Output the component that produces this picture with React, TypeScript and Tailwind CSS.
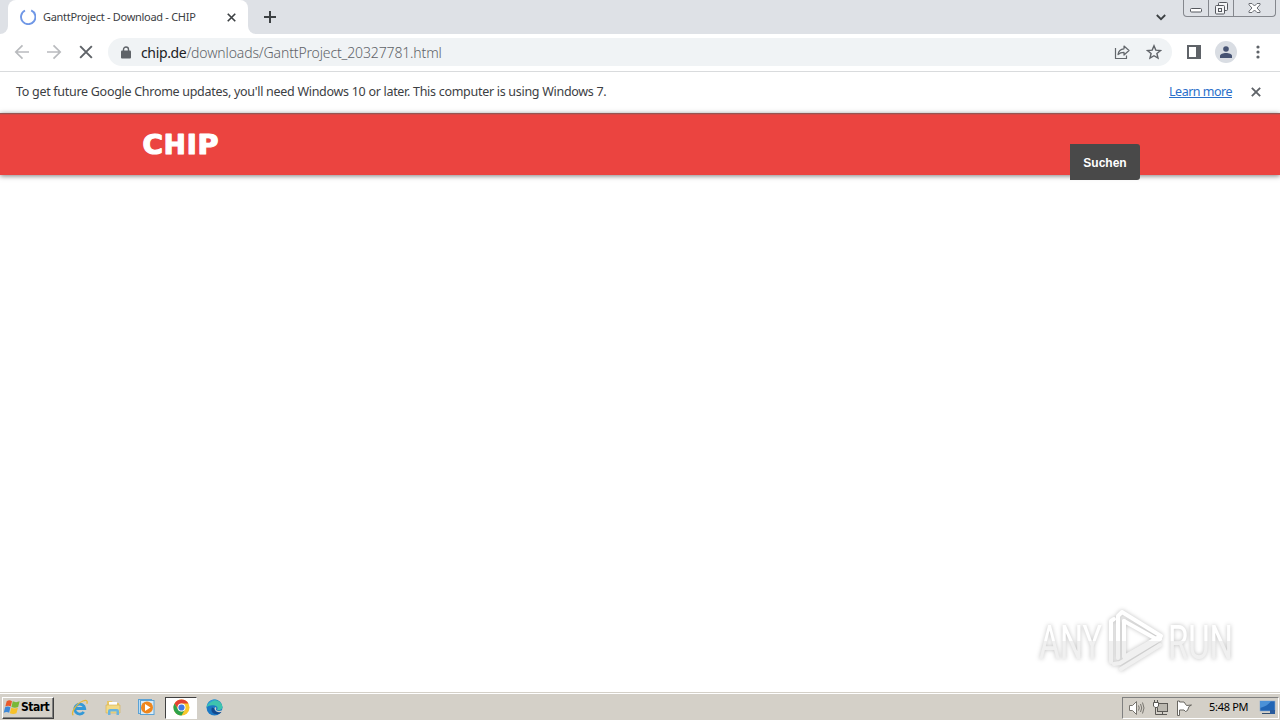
import React from 'react';

const ui = "font-['Noto_Sans','Open_Sans',sans-serif]";

const Spinner = () => (
  <svg className="size-4" viewBox="0 0 16 16" fill="none">
    <path d="M11.2 1.4A7.2 7.2 0 1 1 5 1.5" stroke="#6f97e6" strokeWidth="1.9" />
  </svg>
);

const Cross: React.FC<{ size: number; color: string; weight?: number }> = ({ size, color, weight = 2 }) => (
  <svg width={size} height={size} viewBox="0 0 12 12" fill="none" stroke={color} strokeWidth={weight}>
    <path d="M1 1 11 11M11 1 1 11" />
  </svg>
);

const Arrow: React.FC<{ flip?: boolean }> = ({ flip }) => (
  <svg className={flip ? 'size-4 rotate-180' : 'size-4'} viewBox="0 0 16 16" fill="none" stroke="#b9bbbe" strokeWidth="1.7">
    <path d="M15 8H2M8.5 1.3 1.8 8l6.7 6.7" />
  </svg>
);

const WindowControls = () => (
  <div className="flex h-[17px] w-[93px] rounded-b-[4px] border border-t-0 border-[#84878d] bg-[#dee1e6]">
    <div className="flex w-[25px] justify-center border-r border-[#84878d]">
      <svg width="12" height="16" viewBox="0 0 12 16" fill="#fff" stroke="#55585e">
        <rect x=".5" y="8.5" width="11" height="3.5" rx="1" />
      </svg>
    </div>
    <div className="flex w-[25px] justify-center border-r border-[#84878d]">
      <svg width="13" height="16" viewBox="0 0 13 16" fill="#f4f5f7" stroke="#55585e">
        <rect x="3.5" y="2.5" width="9" height="8" rx="1" />
        <rect x=".5" y="5.5" width="9" height="8.5" rx="1" />
        <rect x="3.5" y="8.5" width="3" height="3" />
      </svg>
    </div>
    <div className="flex flex-1 justify-center">
      <svg width="13" height="16" viewBox="0 0 13 16" fill="#fff" stroke="#6a6d73" strokeLinejoin="round">
        <path d="M1 3.5h3L6.5 6 9 3.5h3v1.3L9 8l3 3.2v1.3H9L6.5 10 4 12.5H1v-1.3L4 8 1 4.8z" />
      </svg>
    </div>
  </div>
);

const TabStrip = () => (
  <div className="flex h-[34px] bg-[#dee1e6]">
    <div className="w-2 bg-white">
      <div className="h-full rounded-br-lg bg-[#dee1e6]" />
    </div>
    <div className="flex w-60 items-center rounded-t-lg bg-white pl-3 pr-2.5">
      <Spinner />
      <span className="ml-[7px] w-[178px] whitespace-nowrap text-[11px] tracking-[-0.29px] text-[#3c4043]">
        GanttProject - Download - CHIP
      </span>
      <span className="ml-1.5">
        <Cross size={9} color="#3c4043" weight={2.2} />
      </span>
    </div>
    <div className="w-2 bg-white">
      <div className="h-full rounded-bl-lg bg-[#dee1e6]" />
    </div>
    <div className="flex flex-1 items-center pl-2">
      <svg width="12" height="12" viewBox="0 0 12 12" stroke="#3c4043" strokeWidth="2">
        <path d="M6 0v12M0 6h12" />
      </svg>
    </div>
    <div className="flex w-[27px] items-center">
      <svg width="10" height="7" viewBox="0 0 10 7" fill="none" stroke="#3c4043" strokeWidth="1.8">
        <path d="m.8 1 4.2 4.2L9.2 1" />
      </svg>
    </div>
    <WindowControls />
    <div className="w-1" />
  </div>
);

const Toolbar = () => (
  <div className="flex h-[38px] items-center border-b border-[#d9dbdd] bg-white pb-px pl-[14px]">
    <div className="flex w-[94px] items-center gap-4">
      <Arrow />
      <Arrow flip />
      <span className="ml-px">
        <Cross size={14} color="#5f6368" weight={1.7} />
      </span>
    </div>
    <div className="flex h-7 w-[1064px] items-center rounded-full bg-[#f0f3f5] pl-[13px] pr-[10px]">
      <svg width="10" height="13" viewBox="0 0 10 13">
        <path d="M2.5 5.5v-2a2.5 2.5 0 0 1 5 0v2" fill="none" stroke="#5f6368" strokeWidth="1.4" />
        <rect y="4.5" width="10" height="8" rx="1" fill="#5f6368" />
      </svg>
      <span className="ml-[10px] flex-1 whitespace-nowrap pt-0.5 text-sm font-light tracking-[-0.14px] text-[#5f6368]">
        <span className="font-normal tracking-[-0.35px] text-[#202124]">chip.de</span>/downloads/GanttProject_20327781.html
      </span>
      <svg width="16" height="16" viewBox="0 0 16 16" fill="none" stroke="#63676c" strokeWidth="1.2" strokeLinejoin="round">
        <path d="M1.5 4v10.500h11v-3" />
        <path d="M4 10.500c.5-3.500 2.500-5.500 6-5.700V2l5 4.500-5 4.500V8.300C7.500 8.300 5.500 9 4 10.500Z" />
      </svg>
      <svg className="ml-4" width="16" height="16" viewBox="0 0 16 16" fill="none" stroke="#5f6368" strokeWidth="1.4">
        <path d="m8 1.800 1.800 4.300 4.700.4-3.600 3 1.100 4.600L8 11.700l-4 2.400 1.100-4.600-3.600-3 4.700-.4z" />
      </svg>
    </div>
    <svg className="ml-[15px]" width="14" height="14" viewBox="0 0 14 14">
      <rect x="1" y="1" width="12" height="12" fill="#fff" stroke="#5f6368" strokeWidth="2" />
      <rect x="9" y="1" width="4.500" height="12" fill="#5f6368" />
    </svg>
    <span className="ml-[14px] flex size-[22px] items-center justify-center rounded-full bg-[#d9dde3]">
      <svg width="12" height="12" viewBox="0 0 12 12" fill="#465373">
        <circle cx="6" cy="3" r="2.8" />
        <path d="M0 12v-2c0-2 3-3 6-3s6 1 6 3v2z" />
      </svg>
    </span>
    <svg className="ml-[19px]" width="4" height="14" viewBox="0 0 4 14" fill="#5f6368">
      <circle cx="2" cy="2" r="1.6" />
      <circle cx="2" cy="7" r="1.6" />
      <circle cx="2" cy="12" r="1.6" />
    </svg>
  </div>
);

const InfoBar = () => (
  <div className="flex h-[41px] items-center bg-white pb-px pl-4 pr-[19px] text-[12.5px] tracking-[-0.29px]">
    <span className="flex-1 whitespace-nowrap text-[#3c4043]">
      To get future Google Chrome updates, you'll need Windows 10 or later. This computer is using Windows 7.
    </span>
    <a className="whitespace-nowrap text-[#2a6fca] underline tracking-[-0.5px]">Learn more</a>
    <span className="ml-[19px]">
      <Cross size={10} color="#5f6368" weight={2.2} />
    </span>
  </div>
);

const ChipLogo = () => (
  <svg
    width="77"
    height="22"
    viewBox="0 0 77 22"
    className="overflow-visible font-['DejaVu_Sans',sans-serif] font-bold"
    fill="#fff"
    stroke="#fff"
    strokeWidth="1.2"
    strokeLinejoin="round"
    fontSize="26"
  >
    <text x=".4" y="20.5" textLength="20.5" lengthAdjust="spacingAndGlyphs">C</text>
    <text x="21.8" y="20.5" textLength="22" lengthAdjust="spacingAndGlyphs">H</text>
    <text x="44.8" y="20.5" textLength="10" lengthAdjust="spacingAndGlyphs">I</text>
    <text x="55.5" y="20.5" textLength="21" lengthAdjust="spacingAndGlyphs">P</text>
  </svg>
);

const Watermark = () => (
  <svg
    width="204"
    height="70"
    viewBox="0 0 204 70"
    className="absolute right-[40px] bottom-[16px] overflow-visible font-['Roboto',sans-serif]"
    style={{ filter: 'drop-shadow(0 0 2px rgba(0,0,0,.25))' }}
  >
    <defs>
      <linearGradient id="fade" x1="0" y1="0" x2="0" y2="70" gradientUnits="userSpaceOnUse">
        <stop offset=".5" stopColor="#fff" />
        <stop offset=".5" stopColor="#f0f0f0" />
      </linearGradient>
    </defs>
    <g fill="url(#fade)" fontSize="48">
      <text x="3" y="53" textLength="63" lengthAdjust="spacingAndGlyphs">ANY</text>
      <text x="132" y="53" textLength="65" lengthAdjust="spacingAndGlyphs">RUN</text>
    </g>
    <g fill="none" stroke="url(#fade)" strokeWidth="4" strokeLinejoin="round" strokeLinecap="round">
      <path d="M75 56V15l3-2" />
      <path d="M82 52V10l4-4 39 24-3 4-34-19" />
      <path d="M88 15v36l35-20M78 58l6-1 40-24M85 63l39-24" />
    </g>
  </svg>
);

const Page = () => (
  <main className="relative h-[579px] bg-white">
    <header className="h-[62px] border-t border-[#965552] bg-[#eb4440] shadow-[0_1px_5px_rgba(0,0,0,0.5)]">
      <div className="h-px bg-[#cf4b47]" />
      <div className="mx-auto flex w-[1000px] items-start justify-between">
        <div className="pl-[2px] pt-[18px]">
          <ChipLogo />
        </div>
        <button className="mt-[29px] h-9 w-[70px] rounded-r-[3px] bg-[#494949] pt-px font-['Liberation_Sans',sans-serif] text-[12px] font-bold text-white">
          Suchen
        </button>
      </div>
    </header>
    <Watermark />
  </main>
);

const WindowsFlag = () => (
  <svg width="18" height="17" viewBox="0 0 17 16">
    <path d="M3.500 2Q6 .5 8.500 2L7.300 7Q5 5.500 2.200 7z" fill="#e95a2c" />
    <path d="M9.200 2.200q3 1.500 6.500 0l-1.400 5.300q-3 1.500-6.300 0z" fill="#79b837" />
    <path d="M2 7.700q2.500-1.500 5 0l-1.200 5.300Q3.500 11.500.7 13z" fill="#3d88d8" />
    <path d="M7.800 8.200q3 1.500 6.300 0l-1.400 5.300q-3 1.500-6.200 0z" fill="#f7c129" />
  </svg>
);

const ExplorerE = () => (
  <svg width="18" height="18" viewBox="0 0 18 18" fill="none">
    <path d="M4.500 9.500h9.200A5 5 0 1 0 12.800 13" stroke="#3499d7" strokeWidth="2.8" />
    <path d="M2.300 16.200C-.5 14 5.500 4.500 12 2c4-1.500 4.700.3 3.800 2.800" stroke="#e4b838" strokeWidth="1.3" />
  </svg>
);

const FolderIcon = () => (
  <svg width="17" height="17" viewBox="0 0 17 17">
    <path d="M2 2h5l1 2h6v10H2z" fill="#e8c767" />
    <path d="M4 3h8v3H4z" fill="#fff" />
    <path d="M1 6h14v8H1z" fill="#f3da85" stroke="#d5ae52" strokeWidth=".6" />
    <path d="M3 16v-4q0-2 2-2h7q2 0 2 2v4h-2.500v-3.500h-6V16z" fill="#69b4de" />
  </svg>
);

const MediaIcon = () => (
  <svg width="17" height="17" viewBox="0 0 17 17">
    <rect x=".5" y=".5" width="13" height="14" fill="#bcdcf3" stroke="#5ba2d5" />
    <rect x="2.5" y="1.5" width="13.500" height="14" fill="#d9ecf8" stroke="#5ba2d5" />
    <circle cx="9" cy="8.500" r="6" fill="#ee861e" />
    <path d="m7 5 5.500 3.500L7 12z" fill="#fff" />
  </svg>
);

const ChromeIcon = () => (
  <svg width="17" height="17" viewBox="0 0 17 17">
    <circle cx="8.500" cy="8.500" r="8" fill="#f8c72b" />
    <path d="M1.570 4.500a8 8 0 0 1 13.860 0H8.500a4 4 0 0 0-3.460 6z" fill="#e34133" />
    <path d="M1.570 4.500a8 8 0 0 0 6.930 12l3.460-6a4 4 0 0 1-6.920 0z" fill="#2da24c" />
    <circle cx="8.500" cy="8.500" r="4" fill="#fff" />
    <circle cx="8.500" cy="8.500" r="3.100" fill="#4279e4" />
  </svg>
);

const EdgeIcon = () => (
  <svg width="17" height="17" viewBox="0 0 17 17">
    <circle cx="8.500" cy="8.500" r="8" fill="#1c78c4" />
    <path d="M.6 8.500a8 8 0 0 1 15.900-.7c.2 3-3 3.700-5.500 3.200 1.300-2 .3-4-2.400-4.500C5.500 5.800 2.200 6.500.6 8.500z" fill="#3ec4ae" />
    <path d="M.6 8.500C1.500 2 7-.5 11 1c-4 .3-8.500 2.500-10.400 7.500z" fill="#2f9ed5" />
    <path d="M6 8.500c-2 4 1.500 7.500 6.500 6.500 1.500-.3 2.500-1.400 3-2.200-3 1.200-7.500.2-7-3.300z" fill="#13488e" />
    <path d="M8.500 9.500c0-1 .8-1.300 1.500-1.200.6 1.200-.1 1.800 0 2.700 2 1.500 4 .8 6.500.2v1.300c-3 1.500-7.700.5-8-3z" fill="#d4d0c8" />
  </svg>
);

const SystemTray = () => (
  <div className="flex h-[22px] w-[157px] items-center border border-b-white border-l-[#808080] border-r-white border-t-[#808080] pl-[5px]">
    <svg width="18" height="16" viewBox="0 0 18 16" fill="#fff" stroke="#77746e">
      <path d="M1.500 5.500h3l4-4v13l-4-4h-3z" />
      <path d="M10.500 5.500q1.500 2.500 0 5M12.500 4q2.500 4 0 8M14.500 2.500q3 5.500 0 11" fill="none" />
    </svg>
    <svg className="ml-[6px]" width="17" height="16" viewBox="0 0 17 16" fill="#fff" stroke="#5b5955">
      <rect x="5.500" y="3.500" width="10" height="8" fill="#bbb8b0" />
      <path d="M7 14.500h8M10.500 12v2.500M3.500 7v7.500H7" fill="none" />
      <path d="M1.500 2.500h5V6L5 7.500H3L1.500 6zM2.500 0v2M5.500 0v2" />
    </svg>
    <svg className="ml-[7px]" width="17" height="16" viewBox="0 0 17 16" fill="#fff" stroke="#686660">
      <path d="M1.500 1v14.500h2V10H8l1.500 1.500 2-1 1.500-4 2.500-1.500-5 .5L8 2H3.500V1z" />
    </svg>
    <span className="ml-4 w-[46px] whitespace-nowrap text-[11px] tracking-[-0.3px] text-black">5:48 PM</span>
    <svg className="ml-1" width="17" height="15" viewBox="0 0 17 15">
      <rect x="1" y="1" width="15" height="10" fill="#2165b5" stroke="#88a9cf" strokeWidth=".6" />
      <path d="M1 1h11Q9 6 1 8z" fill="#4b91d7" />
      <path d="M3 13.500h8" stroke="#304b6b" />
      <path d="M11 10h5v4h-5z" fill="#285a9c" />
    </svg>
  </div>
);

const Taskbar = () => (
  <footer className="flex h-7 items-center border-t border-[#d4d0c8] bg-[#d4d0c8] pl-0.5 pt-0.5 shadow-[inset_0_1px_0_#fff]">
    <button className="flex h-[22px] w-[52px] items-center border border-b-[#404040] border-l-white border-r-[#404040] border-t-white pb-px font-['DejaVu_Sans_Condensed','DejaVu_Sans',sans-serif] text-[12px] font-bold tracking-[-0.5px] text-black shadow-[inset_-1px_-1px_0_#808080]">
      <WindowsFlag />
      <span className="whitespace-nowrap">Start</span>
    </button>
    <div className="ml-[17px] flex flex-1 items-center">
      <span className="w-[34px]"><ExplorerE /></span>
      <span className="w-[33px]"><FolderIcon /></span>
      <span className="w-[27px]"><MediaIcon /></span>
      <span className="flex h-[22px] w-8 items-center justify-center border border-b-white border-l-[#404040] border-r-white border-t-[#404040] bg-white">
        <ChromeIcon />
      </span>
      <span className="ml-[9px]"><EdgeIcon /></span>
    </div>
    <SystemTray />
    <div className="w-px" />
  </footer>
);

const App: React.FC = () => {
  return (
    <div className={`flex h-screen w-full flex-col overflow-hidden bg-white ${ui}`}>
      <TabStrip />
      <Toolbar />
      <InfoBar />
      <Page />
      <Taskbar />
    </div>
  );
};

export default App;
